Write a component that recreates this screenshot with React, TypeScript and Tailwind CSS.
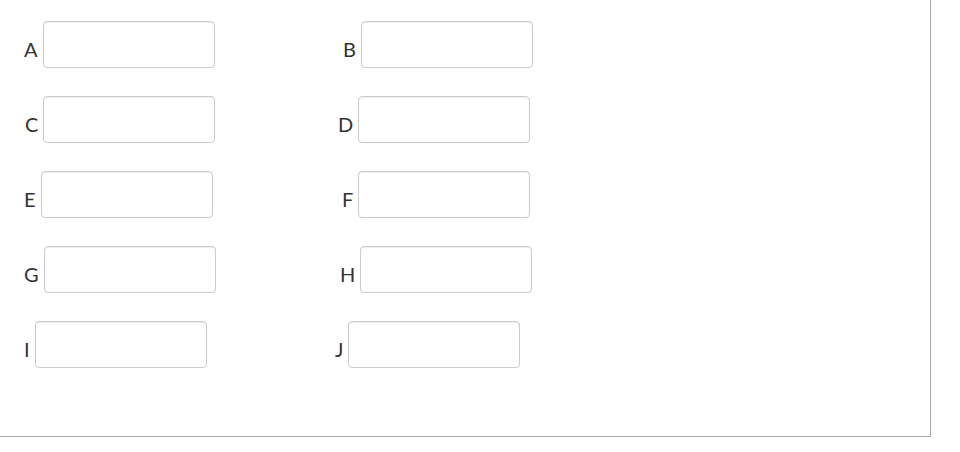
const rows = [
  [
    { label: "A", offset: "ml-[24px]" },
    { label: "B", offset: "ml-[23px]" },
  ],
  [
    { label: "C", offset: "ml-[25px]" },
    { label: "D", offset: "ml-[18px]" },
  ],
  [
    { label: "E", offset: "ml-[24px]" },
    { label: "F", offset: "ml-[22px]" },
  ],
  [
    { label: "G", offset: "ml-[24px]" },
    { label: "H", offset: "ml-[20px]" },
  ],
  [
    { label: "I", offset: "ml-[24px]" },
    { label: "J", offset: "ml-[15px]" },
  ],
];

function Field({ label, offset }: { label: string; offset: string }) {
  return (
    <div className={`flex items-end gap-[5px] ${offset}`}>
      <label className="mb-[9px] text-[20px] leading-[20px] text-[#333333]">
        {label}
      </label>
      <input
        type="text"
        className="h-[47px] w-[172px] rounded-[4px] border border-[#cccccc] bg-white px-3 shadow-[inset_0_1px_1px_rgba(0,0,0,0.075)] outline-none"
      />
    </div>
  );
}

export default function App() {
  return (
    <div
      className="h-[437px] w-[931px] border-r border-b border-[#a9a9a9] bg-white pt-[21px]"
      style={{ fontFamily: "Lato, 'Liberation Sans', sans-serif" }}
    >
      <div className="flex flex-col gap-[28px]">
        {rows.map((row, i) => (
          <div key={i} className="grid grid-cols-[320px_320px]">
            {row.map((f) => (
              <Field key={f.label} label={f.label} offset={f.offset} />
            ))}
          </div>
        ))}
      </div>
    </div>
  );
}
